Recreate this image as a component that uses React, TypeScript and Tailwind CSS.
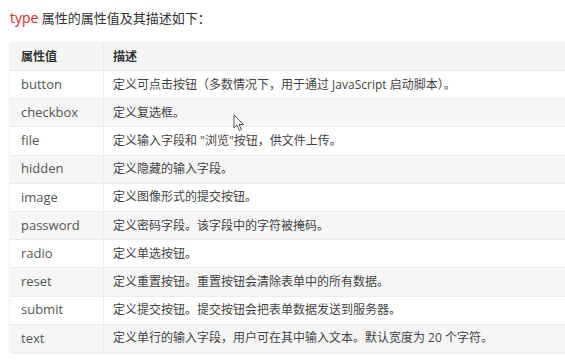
import React from "react";

const rows: [string, string][] = [
  ["button", "定义可点击按钮（多数情况下，用于通过 JavaScript 启动脚本）。"],
  ["checkbox", "定义复选框。"],
  ["file", "定义输入字段和 \"浏览\"按钮，供文件上传。"],
  ["hidden", "定义隐藏的输入字段。"],
  ["image", "定义图像形式的提交按钮。"],
  ["password", "定义密码字段。该字段中的字符被掩码。"],
  ["radio", "定义单选按钮。"],
  ["reset", "定义重置按钮。重置按钮会清除表单中的所有数据。"],
  ["submit", "定义提交按钮。提交按钮会把表单数据发送到服务器。"],
  ["text", "定义单行的输入字段，用户可在其中输入文本。默认宽度为 20 个字符。"],
];

export default function App() {
  return (
    <div
      className="relative w-[565px] h-[361px] overflow-hidden bg-white text-[#444]"
      style={{ fontFamily: '"Open Sans", "Noto Sans CJK SC", sans-serif' }}
    >
      <div className="pl-[10px] pt-[8px] h-[43px] text-[13px] leading-[20px] text-[#333]">
        <span className="text-[#e4232d] text-[14px]">type</span> 属性的属性值及其描述如下：
      </div>
      <div className="ml-[10px] w-[570px] shadow-[0_0_2px_rgba(0,0,0,0.12)]">
        <div className="flex h-[28px] bg-[#f5f5f6] border-b border-[#e6e6e8] text-[12px] font-bold text-[#333]">
          <div className="w-[94px] pl-[11px] flex items-center border-r border-[#e9e9eb]">属性值</div>
          <div className="flex-1 pl-[9px] flex items-center">描述</div>
        </div>
        {rows.map(([k, v], i) => (
          <div
            key={k}
            className={`flex h-[28.2px] border-b border-[#ececee] text-[12px] ${
              i % 2 === 1 ? "bg-[#f6f6f7]" : "bg-white"
            }`}
          >
            <div className="w-[94px] pl-[11px] flex items-center border-r border-[#ededef] text-[13px] text-[#555]">
              {k}
            </div>
            <div className="flex-1 pl-[9px] flex items-center text-[#444]">{v}</div>
          </div>
        ))}
      </div>
      <svg
        className="absolute left-[233px] top-[114px]"
        width="12"
        height="18"
        viewBox="0 0 12 18"
      >
        <path
          d="M1 1 L1 14 L4 11 L6.5 16.5 L8.5 15.5 L6 10.5 L10.5 10.5 Z"
          fill="#fff"
          stroke="#555"
          strokeWidth="1"
          strokeLinejoin="round"
        />
      </svg>
    </div>
  );
}
